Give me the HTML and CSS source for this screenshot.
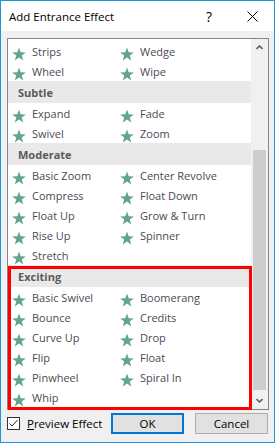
FILE: index.html
```html
<!DOCTYPE html>
<html>
<head>
<meta charset="utf-8">
<link rel="stylesheet" href="styles.css">
</head>
<body>
<svg class="defs" width="0" height="0">
  <symbol id="star" viewBox="0 0 14 14">
    <polygon points="7,0.4 8.7,5.25 13.85,5.38 9.76,8.5 11.23,13.42 7,10.5 2.77,13.42 4.24,8.5 0.15,5.38 5.3,5.25"/>
  </symbol>
</svg>
<div class="window">
  <div class="titlebar">
    <span class="title">Add Entrance Effect</span>
    <span class="help">?</span>
    <span class="close"><svg width="11" height="11" viewBox="0 0 11 11"><path d="M0.5 0.5L10.5 10.5M10.5 0.5L0.5 10.5" stroke="#000" stroke-width="1" fill="none"/></svg></span>
  </div>
  <div class="body">
    <div class="listbox">
      <div class="content">
        <div class="grid">
          <div class="item"><svg class="star"><use href="#star"/></svg>Strips</div>
          <div class="item"><svg class="star"><use href="#star"/></svg>Wedge</div>
          <div class="item"><svg class="star"><use href="#star"/></svg>Wheel</div>
          <div class="item"><svg class="star"><use href="#star"/></svg>Wipe</div>
        </div>
        <div class="header">Subtle</div>
        <div class="grid">
          <div class="item"><svg class="star"><use href="#star"/></svg>Expand</div>
          <div class="item"><svg class="star"><use href="#star"/></svg>Fade</div>
          <div class="item"><svg class="star"><use href="#star"/></svg>Swivel</div>
          <div class="item"><svg class="star"><use href="#star"/></svg>Zoom</div>
        </div>
        <div class="header">Moderate</div>
        <div class="grid">
          <div class="item"><svg class="star"><use href="#star"/></svg>Basic Zoom</div>
          <div class="item"><svg class="star"><use href="#star"/></svg>Center Revolve</div>
          <div class="item"><svg class="star"><use href="#star"/></svg>Compress</div>
          <div class="item"><svg class="star"><use href="#star"/></svg>Float Down</div>
          <div class="item"><svg class="star"><use href="#star"/></svg>Float Up</div>
          <div class="item"><svg class="star"><use href="#star"/></svg>Grow &amp; Turn</div>
          <div class="item"><svg class="star"><use href="#star"/></svg>Rise Up</div>
          <div class="item"><svg class="star"><use href="#star"/></svg>Spinner</div>
          <div class="item"><svg class="star"><use href="#star"/></svg>Stretch</div>
        </div>
        <div class="header">Exciting</div>
        <div class="grid">
          <div class="item"><svg class="star"><use href="#star"/></svg>Basic Swivel</div>
          <div class="item"><svg class="star"><use href="#star"/></svg>Boomerang</div>
          <div class="item"><svg class="star"><use href="#star"/></svg>Bounce</div>
          <div class="item"><svg class="star"><use href="#star"/></svg>Credits</div>
          <div class="item"><svg class="star"><use href="#star"/></svg>Curve Up</div>
          <div class="item"><svg class="star"><use href="#star"/></svg>Drop</div>
          <div class="item"><svg class="star"><use href="#star"/></svg>Flip</div>
          <div class="item"><svg class="star"><use href="#star"/></svg>Float</div>
          <div class="item"><svg class="star"><use href="#star"/></svg>Pinwheel</div>
          <div class="item"><svg class="star"><use href="#star"/></svg>Spiral In</div>
          <div class="item"><svg class="star"><use href="#star"/></svg>Whip</div>
        </div>
      </div>
      <div class="scrollbar">
        <div class="arrow"><svg width="7" height="5" viewBox="0 0 7 5"><path d="M0.5 4L3.5 1L6.5 4" stroke="#606060" stroke-width="1.6" fill="none"/></svg></div>
        <div class="track"><div class="thumb" style="margin-top:94px;height:240px"></div></div>
        <div class="arrow"><svg width="7" height="5" viewBox="0 0 7 5"><path d="M0.5 1L3.5 4L6.5 1" stroke="#606060" stroke-width="1.6" fill="none"/></svg></div>
      </div>
    </div>
    <div class="footer">
      <label class="check">
        <span class="box"><svg width="11" height="11" viewBox="0 0 11 11"><path d="M1.5 5.5L4 8L9.5 2" stroke="#222" stroke-width="1" fill="none"/></svg></span>
        <span class="label"><u>P</u>review Effect</span>
      </label>
      <div class="buttons">
        <button class="btn default">OK</button>
        <button class="btn">Cancel</button>
      </div>
    </div>
  </div>
  <div class="highlight"></div>
</div>
</body>
</html>
```

FILE: styles.css
```css
* { box-sizing: border-box; }
html, body { margin: 0; padding: 0; }
body {
  font-family: "Open Sans", "Noto Sans", sans-serif;
  font-size: 11px;
  background: #fff;
}
.defs { position: absolute; }
.window {
  position: relative;
  width: 275px;
  height: 443px;
  border: 1px solid #1c97d4;
  background: #f0f0f0;
  display: flex;
  flex-direction: column;
}
.titlebar {
  height: 30px;
  background: #fff;
  display: flex;
  align-items: center;
  padding-left: 8px;
  flex: none;
}
.title {
  font-size: 11.5px;
  color: #000;
  flex: 1;
}
.help {
  font-size: 14px;
  color: #000;
  width: 10px;
  margin-right: 31px;
}
.close {
  width: 11px;
  height: 11px;
  margin-right: 16px;
  display: flex;
  margin-top: 1px;
}
.body {
  flex: 1;
  display: flex;
  flex-direction: column;
  padding: 7px 5px 0 6px;
}
.listbox {
  height: 372px;
  border: 1px solid #828790;
  background: #fff;
  display: flex;
  overflow: hidden;
}
.content {
  flex: 1;
  padding-top: 2px;
  overflow: hidden;
}
.grid {
  display: grid;
  grid-template-columns: 108px 1fr;
}
.item {
  height: 20px;
  display: flex;
  align-items: center;
  padding-left: 4px;
  color: #4a4a54;
  white-space: nowrap;
}
.star {
  width: 14px;
  height: 14px;
  fill: #62a68a;
  margin-right: 6px;
  margin-top: 5px;
  flex: none;
}
.header {
  height: 22px;
  background: #e9e9e9;
  display: flex;
  align-items: center;
  padding-left: 10px;
  font-weight: bold;
  color: #5a5a5a;
}
.scrollbar {
  width: 17px;
  flex: none;
  background: #f0f0f0;
  display: flex;
  flex-direction: column;
}
.arrow {
  height: 17px;
  display: flex;
  align-items: center;
  justify-content: center;
  flex: none;
}
.track {
  flex: 1;
  display: flex;
  flex-direction: column;
  align-items: center;
}
.thumb {
  width: 13px;
  background: #cdcdcd;
}
.footer {
  flex: 1;
  display: flex;
  align-items: flex-start;
  padding: 3px 1px 0 0;
}
.check {
  display: flex;
  align-items: center;
  margin-top: 3px;
}
.box {
  width: 13px;
  height: 13px;
  border: 1px solid #333;
  background: #fff;
  display: flex;
  align-items: center;
  justify-content: center;
  margin-right: 7px;
}
.label {
  font-size: 11.5px;
  color: #000;
}
.buttons {
  margin-left: auto;
  display: flex;
  gap: 11px;
}
.btn {
  width: 73px;
  height: 21px;
  border: 1px solid #adadad;
  background: #e1e1e1;
  font-family: "Open Sans", "Noto Sans", sans-serif;
  font-size: 11.5px;
  color: #000;
  padding: 0;
}
.btn.default {
  border: 2px solid #0078d7;
}
.highlight {
  position: absolute;
  left: 7px;
  top: 265px;
  width: 244px;
  height: 144px;
  border: 3px solid #ff0000;
  pointer-events: none;
}
```
